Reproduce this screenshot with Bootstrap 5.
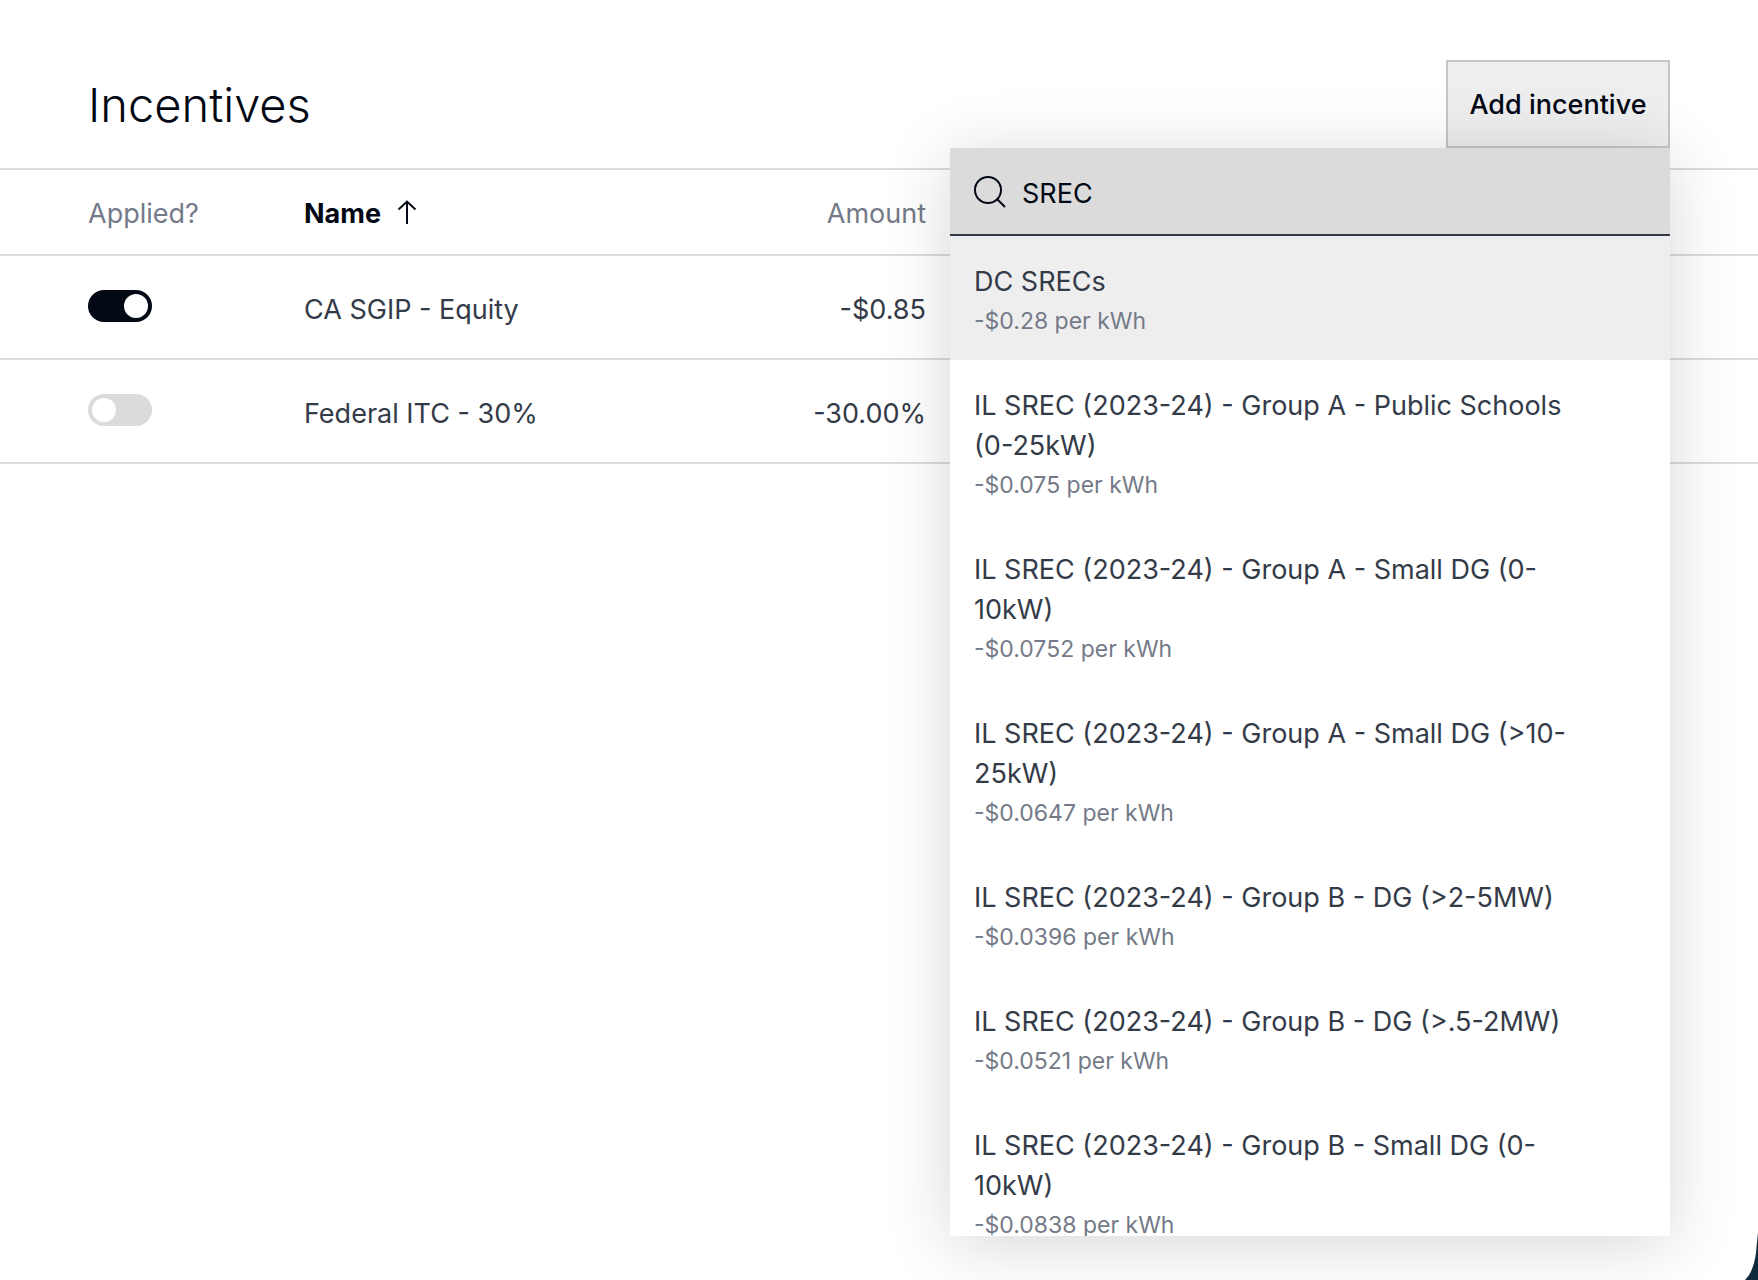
<!DOCTYPE html>
<html lang="en">
<head>
<meta charset="utf-8">
<meta name="viewport" content="width=device-width, initial-scale=1">
<title>Incentives</title>
<link href="https://cdn.jsdelivr.net/npm/bootstrap@5.3.0/dist/css/bootstrap.min.css" rel="stylesheet">
<style>
:root { --ink: #020814; --slate: #343b48; --muted: #747a87; --line: #dbdbdb; }
body { font-family: Inter, "Liberation Sans", sans-serif; font-size: 27px; line-height: 40px; color: var(--slate); background: #fff; overflow: hidden; }
.page { min-height: 100vh; overflow: hidden; }
.page-head { padding: 60px 88px 20px; }
.page-title { font-size: 47px; line-height: 60px; padding-top: 2px; font-weight: 300; color: var(--ink); }
.btn-add { width: 224px; height: 88px; padding: 2px 0 0; font-size: 27px; font-weight: 500; color: var(--ink); background: #eee; border: 2px solid #c3c6ca; border-radius: 0; }
.btn-add:hover { background: #eee; border-color: #c3c6ca; color: var(--ink); }
.incentive-table { table-layout: fixed; color: var(--slate); border-top: 2px solid var(--line); --bs-table-bg: transparent; }
.incentive-table > :not(caption) > * > * { padding: 0 24px; border-bottom: 2px solid var(--line); color: inherit; vertical-align: middle; }
.incentive-table th:first-child, .incentive-table td:first-child { padding-left: 88px; padding-right: 0; }
.incentive-table thead th { height: 86px; padding-top: 3px; font-weight: 400; color: var(--muted); }
.incentive-table tbody td { height: 104px; padding-top: 5px; }
.incentive-table tbody td:first-child { padding-top: 0; padding-bottom: 2px; }
.incentive-table thead .sorted { color: var(--ink); font-weight: 700; }
.sort-arrow { margin-left: 10px; margin-bottom: 6px; }
.col-applied { width: 280px; }
.col-name { width: 392px; }
.col-amount { width: 278px; }
.switch-input.form-check-input { width: 64px; height: 32px; margin: 0; border: 0; border-radius: 16px; background-color: var(--line); background-size: 32px 32px; background-position: left center; background-image: url("data:image/svg+xml,%3csvg xmlns='http://www.w3.org/2000/svg' viewBox='0 0 32 32'%3e%3ccircle r='12' cx='16' cy='16' fill='%23fff'/%3e%3c/svg%3e"); display: block; }
.switch-input.form-check-input:checked { background-color: var(--ink); background-position: right center; }
.picker { position: absolute; top: 100%; right: 0; z-index: 10; width: 720px; background: #fff; box-shadow: 0 8px 64px rgba(0,0,0,.16); }
.picker-search { height: 88px; padding: 2px 24px 0; gap: 16px; background: var(--line); border-bottom: 2px solid var(--slate); }
.picker-search input { font-size: 27px; color: var(--ink); padding: 4px 0 0; border: 0; background: none; outline: 0; }
.picker-list { max-height: calc(100vh - 280px); overflow: hidden; }
.picker-item { padding: 26px 96px 19px 24px; border: 0; color: var(--slate); }
.picker-item.active { background: #eee; color: var(--slate); }
.picker-rate { font-size: 23px; line-height: 39px; color: var(--muted); }
.page-corner { position: absolute; right: 0; bottom: 0; }
</style>
</head>
<body>
<main class="page position-relative">
  <header class="page-head d-flex justify-content-between align-items-center">
    <h1 class="page-title m-0">Incentives</h1>
    <div class="position-relative">
      <button type="button" class="btn btn-add d-block" aria-expanded="true">Add incentive</button>
      <div class="picker">
        <div class="picker-search d-flex align-items-center">
          <svg width="32" height="32" viewBox="0 0 32 32" fill="none" stroke="#020814" stroke-width="2" stroke-linecap="round" aria-hidden="true"><circle cx="14" cy="14" r="13"/><path d="M23.300 23.300 30.500 30.500"/></svg>
          <input type="text" class="flex-grow-1" aria-label="Search incentives" value="SREC">
        </div>
        <div class="picker-list list-group list-group-flush">
          <a href="#" class="picker-item list-group-item list-group-item-action active"><div>DC SRECs</div><div class="picker-rate">-$0.28 per kWh</div></a>
          <a href="#" class="picker-item list-group-item list-group-item-action"><div>IL SREC (2023-24) - Group A - Public Schools (0-25kW)</div><div class="picker-rate">-$0.075 per kWh</div></a>
          <a href="#" class="picker-item list-group-item list-group-item-action"><div>IL SREC (2023-24) - Group A - Small DG (0-10kW)</div><div class="picker-rate">-$0.0752 per kWh</div></a>
          <a href="#" class="picker-item list-group-item list-group-item-action"><div>IL SREC (2023-24) - Group A - Small DG (&gt;10-25kW)</div><div class="picker-rate">-$0.0647 per kWh</div></a>
          <a href="#" class="picker-item list-group-item list-group-item-action"><div>IL SREC (2023-24) - Group B - DG (&gt;2-5MW)</div><div class="picker-rate">-$0.0396 per kWh</div></a>
          <a href="#" class="picker-item list-group-item list-group-item-action"><div>IL SREC (2023-24) - Group B - DG (&gt;.5-2MW)</div><div class="picker-rate">-$0.0521 per kWh</div></a>
          <a href="#" class="picker-item list-group-item list-group-item-action"><div>IL SREC (2023-24) - Group B - Small DG (0-10kW)</div><div class="picker-rate">-$0.0838 per kWh</div></a>
        </div>
      </div>
    </div>
  </header>
  <table class="incentive-table table m-0">
    <colgroup><col class="col-applied"><col class="col-name"><col class="col-amount"><col></colgroup>
    <thead>
      <tr>
        <th scope="col">Applied?</th>
        <th scope="col" class="sorted" aria-sort="ascending">Name <svg class="sort-arrow" width="20" height="24" viewBox="0 0 20 24" fill="none" stroke="#020814" stroke-width="2" aria-hidden="true"><path d="M10 24V1.500M1.500 9.500 10 1.500l8.500 8"/></svg></th>
        <th scope="col" class="text-end">Amount</th>
        <td></td>
      </tr>
    </thead>
    <tbody>
      <tr>
        <td><input class="switch-input form-check-input" type="checkbox" role="switch" aria-label="Apply CA SGIP - Equity" checked></td>
        <td>CA SGIP - Equity</td>
        <td class="text-end">-$0.85</td>
        <td></td>
      </tr>
      <tr>
        <td><input class="switch-input form-check-input" type="checkbox" role="switch" aria-label="Apply Federal ITC - 30%"></td>
        <td>Federal ITC - 30%</td>
        <td class="text-end">-30.00%</td>
        <td></td>
      </tr>
    </tbody>
  </table>
  <svg class="page-corner" width="16" height="52" viewBox="0 0 16 52" aria-hidden="true"><path d="M16 4V52H3C9 46 12 38 14 25Q15 14 16 4Z" fill="#0c2a3c"/></svg>
</main>
<script src="https://cdn.jsdelivr.net/npm/bootstrap@5.3.0/dist/js/bootstrap.bundle.min.js"></script>
</body>
</html>
